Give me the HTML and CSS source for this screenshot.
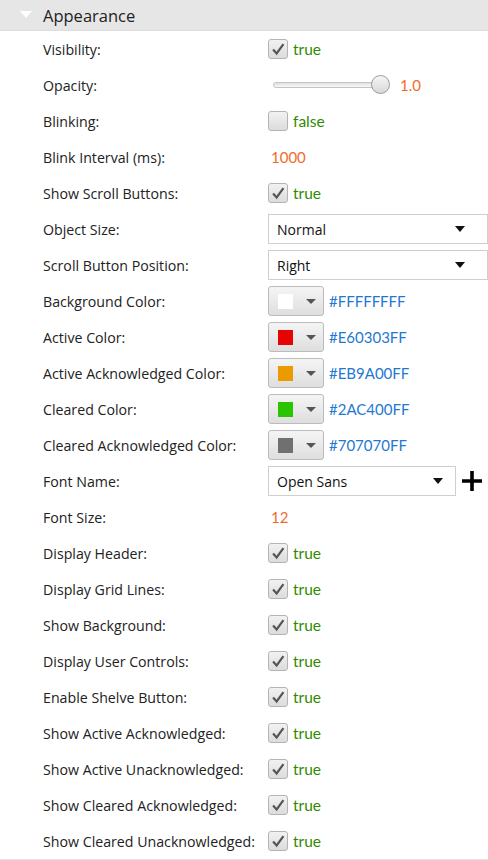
FILE: index.html
```html
<!DOCTYPE html>
<html>
<head>
<meta charset="utf-8">
<link rel="stylesheet" href="styles.css">
</head>
<body>
<div class="panel">
  <div class="header">
    <svg class="caret" width="12" height="8" viewBox="0 0 12 8"><polygon points="0,0 12,0 6,7" fill="#ffffff"/></svg>
    <span class="title">Appearance</span>
  </div>
  <div class="rows">
    <div class="row"><span class="label">Visibility:</span><span class="val"><span class="cb on"><svg viewBox="0 0 20 20"><path d="M4.5 10.5 L8.5 15 L16 4.5" fill="none" stroke="#555" stroke-width="2.4"/></svg></span><span class="bool">true</span></span></div>
    <div class="row"><span class="label">Opacity:</span><span class="val"><span class="slider"><span class="track"></span><span class="knob"></span></span><span class="num">1.0</span></span></div>
    <div class="row"><span class="label">Blinking:</span><span class="val"><span class="cb"></span><span class="bool">false</span></span></div>
    <div class="row"><span class="label">Blink Interval (ms):</span><span class="val"><span class="num plain">1000</span></span></div>
    <div class="row"><span class="label">Show Scroll Buttons:</span><span class="val"><span class="cb on"><svg viewBox="0 0 20 20"><path d="M4.5 10.5 L8.5 15 L16 4.5" fill="none" stroke="#555" stroke-width="2.4"/></svg></span><span class="bool">true</span></span></div>
    <div class="row"><span class="label">Object Size:</span><span class="val"><span class="select wide"><span>Normal</span><svg width="10" height="6" viewBox="0 0 10 6"><polygon points="0,0 10,0 5,6" fill="#111"/></svg></span></span></div>
    <div class="row"><span class="label">Scroll Button Position:</span><span class="val"><span class="select wide"><span>Right</span><svg width="10" height="6" viewBox="0 0 10 6"><polygon points="0,0 10,0 5,6" fill="#111"/></svg></span></span></div>
    <div class="row"><span class="label">Background Color:</span><span class="val"><span class="cbtn"><span class="sw" style="background:#FFFFFF"></span><svg width="10" height="5" viewBox="0 0 10 5"><polygon points="0,0 10,0 5,5" fill="#555"/></svg></span><span class="hex">#FFFFFFFF</span></span></div>
    <div class="row"><span class="label">Active Color:</span><span class="val"><span class="cbtn"><span class="sw" style="background:#E60303"></span><svg width="10" height="5" viewBox="0 0 10 5"><polygon points="0,0 10,0 5,5" fill="#555"/></svg></span><span class="hex">#E60303FF</span></span></div>
    <div class="row"><span class="label">Active Acknowledged Color:</span><span class="val"><span class="cbtn"><span class="sw" style="background:#EB9A00"></span><svg width="10" height="5" viewBox="0 0 10 5"><polygon points="0,0 10,0 5,5" fill="#555"/></svg></span><span class="hex">#EB9A00FF</span></span></div>
    <div class="row"><span class="label">Cleared Color:</span><span class="val"><span class="cbtn"><span class="sw" style="background:#2AC400"></span><svg width="10" height="5" viewBox="0 0 10 5"><polygon points="0,0 10,0 5,5" fill="#555"/></svg></span><span class="hex">#2AC400FF</span></span></div>
    <div class="row"><span class="label">Cleared Acknowledged Color:</span><span class="val"><span class="cbtn"><span class="sw" style="background:#707070"></span><svg width="10" height="5" viewBox="0 0 10 5"><polygon points="0,0 10,0 5,5" fill="#555"/></svg></span><span class="hex">#707070FF</span></span></div>
    <div class="row"><span class="label">Font Name:</span><span class="val"><span class="select font"><span>Open Sans</span><svg width="10" height="6" viewBox="0 0 10 6"><polygon points="0,0 10,0 5,6" fill="#111"/></svg></span><svg class="plus" width="20" height="20" viewBox="0 0 20 20"><path d="M10 0 V20 M0 10 H20" stroke="#000" stroke-width="3.6"/></svg></span></div>
    <div class="row"><span class="label">Font Size:</span><span class="val"><span class="num plain">12</span></span></div>
    <div class="row"><span class="label">Display Header:</span><span class="val"><span class="cb on"><svg viewBox="0 0 20 20"><path d="M4.5 10.5 L8.5 15 L16 4.5" fill="none" stroke="#555" stroke-width="2.4"/></svg></span><span class="bool">true</span></span></div>
    <div class="row"><span class="label">Display Grid Lines:</span><span class="val"><span class="cb on"><svg viewBox="0 0 20 20"><path d="M4.5 10.5 L8.5 15 L16 4.5" fill="none" stroke="#555" stroke-width="2.4"/></svg></span><span class="bool">true</span></span></div>
    <div class="row"><span class="label">Show Background:</span><span class="val"><span class="cb on"><svg viewBox="0 0 20 20"><path d="M4.5 10.5 L8.5 15 L16 4.5" fill="none" stroke="#555" stroke-width="2.4"/></svg></span><span class="bool">true</span></span></div>
    <div class="row"><span class="label">Display User Controls:</span><span class="val"><span class="cb on"><svg viewBox="0 0 20 20"><path d="M4.5 10.5 L8.5 15 L16 4.5" fill="none" stroke="#555" stroke-width="2.4"/></svg></span><span class="bool">true</span></span></div>
    <div class="row"><span class="label">Enable Shelve Button:</span><span class="val"><span class="cb on"><svg viewBox="0 0 20 20"><path d="M4.5 10.5 L8.5 15 L16 4.5" fill="none" stroke="#555" stroke-width="2.4"/></svg></span><span class="bool">true</span></span></div>
    <div class="row"><span class="label">Show Active Acknowledged:</span><span class="val"><span class="cb on"><svg viewBox="0 0 20 20"><path d="M4.5 10.5 L8.5 15 L16 4.5" fill="none" stroke="#555" stroke-width="2.4"/></svg></span><span class="bool">true</span></span></div>
    <div class="row"><span class="label">Show Active Unacknowledged:</span><span class="val"><span class="cb on"><svg viewBox="0 0 20 20"><path d="M4.5 10.5 L8.5 15 L16 4.5" fill="none" stroke="#555" stroke-width="2.4"/></svg></span><span class="bool">true</span></span></div>
    <div class="row"><span class="label">Show Cleared Acknowledged:</span><span class="val"><span class="cb on"><svg viewBox="0 0 20 20"><path d="M4.5 10.5 L8.5 15 L16 4.5" fill="none" stroke="#555" stroke-width="2.4"/></svg></span><span class="bool">true</span></span></div>
    <div class="row"><span class="label">Show Cleared Unacknowledged:</span><span class="val"><span class="cb on"><svg viewBox="0 0 20 20"><path d="M4.5 10.5 L8.5 15 L16 4.5" fill="none" stroke="#555" stroke-width="2.4"/></svg></span><span class="bool">true</span></span></div>
  </div>
</div>
</body>
</html>
```
FILE: styles.css
```css
html, body {
  margin: 0;
  padding: 0;
  background: #ffffff;
}
body {
  width: 488px;
  height: 860px;
  overflow: hidden;
  font-family: "Open Sans", "Noto Sans", sans-serif;
  color: #222;
}
.panel {
  width: 488px;
}
.header {
  height: 31px;
  background: #e6e6e6;
  border-bottom: 1px solid #dcdcdc;
  display: flex;
  align-items: center;
  box-sizing: border-box;
}
.caret {
  margin-left: 20px;
  margin-right: 11px;
}
.title {
  font-size: 16.5px;
  color: #222;
}
.rows {
  border-bottom: 2px solid #e2e2e2;
}
.row {
  height: 36px;
  display: grid;
  grid-template-columns: 268px 1fr;
  align-items: center;
}
.label {
  padding-left: 43px;
  font-size: 14.2px;
  letter-spacing: 0;
  color: #222;
  white-space: nowrap;
}
.val {
  display: flex;
  align-items: center;
  min-width: 0;
}
.cb {
  width: 20px;
  height: 20px;
  box-sizing: border-box;
  border: 1px solid #b4b4b4;
  border-radius: 3px;
  background: linear-gradient(#f2f2f2, #dcdcdc);
  display: inline-flex;
}
.cb svg {
  width: 18px;
  height: 18px;
}
.bool {
  margin-left: 5px;
  font-family: "Lato", "Open Sans", sans-serif;
  font-size: 15.5px;
  color: #2f8a00;
}
.num {
  font-family: "Lato", "Open Sans", sans-serif;
  font-size: 15px;
  color: #f26b2a;
  margin-left: 5px;
}
.num.plain {
  margin-left: 3px;
}
.slider {
  position: relative;
  width: 122px;
  height: 20px;
  margin-left: 5px;
}
.track {
  position: absolute;
  left: 0;
  top: 7px;
  width: 112px;
  height: 6px;
  box-sizing: border-box;
  border: 1px solid #c4c4c4;
  border-radius: 3px;
  background: linear-gradient(#e0e0e0, #f8f8f8);
}
.knob {
  position: absolute;
  left: 98px;
  top: 0;
  width: 19px;
  height: 19px;
  box-sizing: border-box;
  border: 1px solid #9a9a9a;
  border-radius: 50%;
  background: linear-gradient(#f6f6f6, #d8d8d8);
}
.select {
  height: 30px;
  box-sizing: border-box;
  border: 1px solid #cfcfcf;
  background: #ffffff;
  display: flex;
  align-items: center;
  justify-content: space-between;
  padding: 0 10px 0 8px;
  font-size: 14px;
  color: #111;
}
.select.wide {
  width: 230px;
  padding-right: 22px;
}
.select.font {
  width: 188px;
  padding-right: 12px;
}
.plus {
  margin-left: 6px;
}
.cbtn {
  width: 56px;
  height: 30px;
  box-sizing: border-box;
  border: 1px solid #bcbcbc;
  border-radius: 3px;
  background: linear-gradient(#f5f5f5, #dedede);
  display: flex;
  align-items: center;
  padding-left: 9px;
}
.sw {
  width: 15px;
  height: 15px;
}
.cbtn svg {
  margin-left: 13px;
}
.hex {
  margin-left: 5px;
  font-family: "Lato", "Open Sans", sans-serif;
  font-size: 15px;
  color: #1f78d1;
}
```
